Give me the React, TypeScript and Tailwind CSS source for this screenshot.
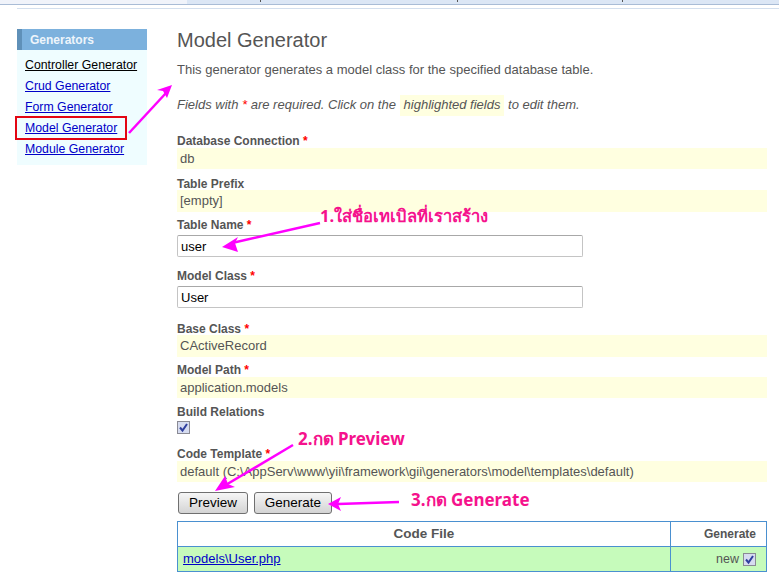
import * as React from "react";

const links = [
  { label: "Controller Generator", color: "text-black" },
  { label: "Crud Generator", color: "text-[#0000c8]" },
  { label: "Form Generator", color: "text-[#0000c8]" },
  { label: "Model Generator", color: "text-[#0000c8]" },
  { label: "Module Generator", color: "text-[#0000c8]" },
];

function Label({ text, required, className = "" }: { text: string; required?: boolean; className?: string }) {
  return (
    <div className={`h-[16px] text-[12px] leading-[16px] font-bold text-[#555] ${className}`}>
      {text}
      {required && <span className="text-[#f00]"> *</span>}
    </div>
  );
}

function Sticky({ value, className = "" }: { value: string; className?: string }) {
  return <div className={`bg-[#ffffe0] pl-[3px] text-[13px] text-[#555] ${className}`}>{value}</div>;
}

function TextBox({ value }: { value: string }) {
  return (
    <div className="h-[22px] w-[406px] rounded-[2px] border border-[#c4c4c4] border-t-[#a8a8a8] bg-white pl-[3px] text-[13px] leading-[21px] text-black">
      {value}
    </div>
  );
}

function Check() {
  return (
    <span className="inline-flex h-[13px] w-[13px] items-center justify-center border border-[#8a8a94] bg-[#d6dcf0]">
      <svg width="11" height="11" viewBox="0 0 11 11">
        <path d="M2 5.5 L4.5 8.5 L9 2" fill="none" stroke="#2f3f9e" strokeWidth="2" />
      </svg>
    </span>
  );
}

function Btn({ label, width }: { label: string; width: string }) {
  return (
    <button className={`h-[22px] ${width} rounded-[3px] border border-[#707070] bg-gradient-to-b from-[#f6f6f6] to-[#d4d4d4] text-[13.5px] leading-[20px] text-black`}>
      {label}
    </button>
  );
}

function Arrow({ d, tip }: { d: string; tip: string }) {
  return (
    <g>
      <path d={d} fill="none" stroke="#f0f" strokeWidth="2.5" />
      <path d={tip} fill="#f0f" />
    </g>
  );
}

function TabEnd({ width }: { width: string }) {
  return (
    <div className={`flex ${width} justify-end`}>
      <div className="h-[2px] w-px bg-[#555]" />
    </div>
  );
}

export default function App() {
  return (
    <div className="relative h-[576px] w-[779px] overflow-hidden bg-white font-['Liberation_Sans',Arial,sans-serif]">
      <div className="flex h-[5px] border-b border-[#a9bcd6] bg-[#dbe6f5]">
        <div className="h-full w-[187px] bg-[#f0f3fa]" />
        <TabEnd width="w-[74px]" />
        <TabEnd width="w-[197px]" />
        <TabEnd width="w-[165px]" />
      </div>
      <div className="ml-[17px] mt-[3px] h-px bg-[#d3dfee]" />

      <div className="flex pl-[17px] pr-[12px] pt-[20px]">
        <aside className="h-[136px] w-[130px] shrink-0 bg-[#effdff]">
          <div className="h-[21px] border-l-[5px] border-[#5f90b8] bg-[#7cb1dd] pl-[8px] text-[12px] font-bold leading-[22px] text-[#eef5fb]">
            Generators
          </div>
          <ul className="pt-[5px]">
            {links.map((link) => (
              <li key={link.label} className="h-[21px] pl-[8px] text-[12.3px] leading-[21px]">
                <a className={`underline ${link.color}`}>{link.label}</a>
              </li>
            ))}
          </ul>
        </aside>

        <main className="ml-[30px] flex-1">
          <h1 className="mt-[-1px] h-[24px] text-[20px] leading-[24px] text-[#555]">Model Generator</h1>
          <p className="mt-[10px] h-[16px] text-[13px] leading-[16px] text-[#555]">
            This generator generates a model class for the specified database table.
          </p>
          <p className="mt-[17px] h-[20px] text-[13px] italic leading-[20px] text-[#555]">
            Fields with <span className="text-[#f00]">*</span> are required. Click on the{" "}
            <span className="inline-block h-[21px] bg-[#ffffe0] px-[4px]">highlighted fields</span> to edit them.
          </p>

          <Label text="Database Connection" required className="mt-[18px]" />
          <Sticky value="db" className="mt-[-1px] h-[21px] leading-[21px]" />
          <Label text="Table Prefix" className="mt-[7px]" />
          <Sticky value="[empty]" className="mt-[-2px] h-[22px] leading-[22px]" />
          <Label text="Table Name" required className="mt-[5px]" />
          <div className="mt-[2px]">
            <TextBox value="user" />
          </div>
          <Label text="Model Class" required className="mt-[11px]" />
          <div className="mt-[2px]">
            <TextBox value="User" />
          </div>
          <Label text="Base Class" required className="mt-[13px]" />
          <Sticky value="CActiveRecord" className="mt-[-2px] h-[22px] leading-[22px]" />
          <Label text="Model Path" required className="mt-[5px]" />
          <Sticky value="application.models" className="mt-[-1px] h-[21px] leading-[22px]" />
          <Label text="Build Relations" className="mt-[6px]" />
          <div className="mt-[1px] flex h-[14px] items-start">
            <Check />
          </div>
          <Label text="Code Template" required className="mt-[11px]" />
          <Sticky value="default (C:\AppServ\www\yii\framework\gii\generators\model\templates\default)" className="mt-[-1px] h-[21px] leading-[22px]" />

          <div className="mt-[10px] flex gap-[6px] pl-[1px]">
            <Btn label="Preview" width="w-[70px]" />
            <Btn label="Generate" width="w-[78px]" />
          </div>

          <table className="mt-[7px] w-full border-collapse border border-[#4a90d0] text-[#555]">
            <thead>
              <tr className="h-[25px] bg-white">
                <th className="border border-[#4a90d0] text-[13.5px] font-bold">Code File</th>
                <th className="w-[96px] border border-[#4a90d0] pr-[10px] text-right text-[12px] font-bold">Generate</th>
              </tr>
            </thead>
            <tbody>
              <tr className="h-[25px] bg-[#c6fbbb]">
                <td className="border border-[#4a90d0] pl-[5px] text-[13px]">
                  <a className="text-[#0000c8] underline">models\User.php</a>
                </td>
                <td className="border border-[#4a90d0] pr-[10px] text-right text-[12.5px]">
                  <span className="inline-flex items-center gap-[4px]">
                    new <Check />
                  </span>
                </td>
              </tr>
            </tbody>
          </table>
        </main>
      </div>

      {/* screenshot annotations */}
      <div className="absolute left-[15px] top-[116px] h-[24px] w-[112px] border-2 border-[#e30613]" />
      <span className="absolute left-[320px] top-[207px] font-['Noto_Sans','DejaVu_Sans',sans-serif] text-[16.6px] font-bold leading-[18px] text-[#f5128c]">1.ใส่ชื่อเทเบิลที่เราสร้าง</span>
      <span className="absolute left-[298px] top-[430px] font-['Noto_Sans','DejaVu_Sans',sans-serif] text-[17px] font-bold leading-[18px] text-[#f5128c]">2.กด Preview</span>
      <span className="absolute left-[411px] top-[491px] font-['Noto_Sans','DejaVu_Sans',sans-serif] text-[17px] font-bold leading-[18px] text-[#f5128c]">3.กด Generate</span>
      <svg className="pointer-events-none absolute left-0 top-0" width="779" height="576" viewBox="0 0 779 576">
        <Arrow d="M129 133 L166 93" tip="M172 85 L157 90 L163 91 L167 98 Z" />
        <Arrow d="M320 223 L232 243" tip="M222 247 L238 237 L235 243 L238 252 Z" />
        <Arrow d="M293 445 L224 486" tip="M215 491 L225 476 L228 484 L235 487 Z" />
        <Arrow d="M399 502 L338 504" tip="M328 504 L341 497 L338 504 L341 511 Z" />
      </svg>
    </div>
  );
}
